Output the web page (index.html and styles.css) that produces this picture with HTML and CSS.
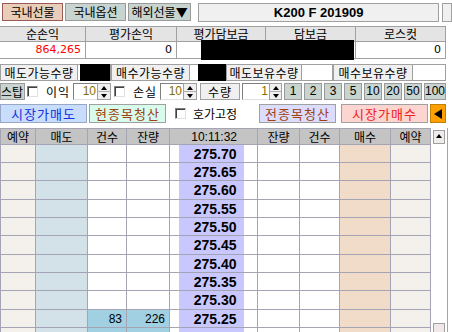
FILE: index.html
```html
<!DOCTYPE html>
<html lang="ko">
<head>
<meta charset="utf-8">
<link rel="stylesheet" href="styles.css">
</head>
<body>
<div class="app">
  <div class="tabs">
    <div class="tab tab-on">국내선물</div>
    <div class="tab">국내옵션</div>
    <div class="tab tab-wide">해외선물▼</div>
    <div class="title">K200 F 201909</div>
    <div class="edge"></div>
  </div>

  <div class="summary">
    <div class="sh">순손익</div>
    <div class="sh">평가손익</div>
    <div class="sh">평가담보금</div>
    <div class="sh">담보금</div>
    <div class="sh">로스컷</div>
    <div class="sv red">864,265</div>
    <div class="sv">0</div>
    <div class="sv"></div>
    <div class="sv"></div>
    <div class="sv">0</div>
    <div class="redact r1"></div>
  </div>

  <div class="qty">
    <div class="lbl w78">매도가능수량</div>
    <div class="val w33"><span class="blk b1"></span></div>
    <div class="lbl w79">매수가능수량</div>
    <div class="val w36"><span class="blk b2"></span></div>
    <div class="lbl w76">매도보유수량</div>
    <div class="val w31"></div>
    <div class="lbl w80">매수보유수량</div>
    <div class="val w33"></div>
  </div>

  <div class="ctrl">
    <div class="btn stop">스탑</div>
    <span class="chk c1"></span>
    <span class="txt t1">이익</span>
    <div class="spin s1"><span class="inp">10</span><span class="arr"><i class="up"></i><i class="dn"></i></span></div>
    <span class="chk c2"></span>
    <span class="txt t2">손실</span>
    <div class="spin s2"><span class="inp">10</span><span class="arr"><i class="up"></i><i class="dn"></i></span></div>
    <div class="lbl qlbl">수량</div>
    <div class="spin s3"><span class="inp">1</span><span class="arr"><i class="up"></i><i class="dn"></i></span></div>
    <div class="nums">
      <div class="btn n">1</div>
      <div class="btn n">2</div>
      <div class="btn n">3</div>
      <div class="btn n">5</div>
      <div class="btn n">10</div>
      <div class="btn n">20</div>
      <div class="btn n">50</div>
      <div class="btn n n100">100</div>
    </div>
  </div>

  <div class="actions">
    <div class="act sell">시장가매도</div>
    <div class="act clr1">현종목청산</div>
    <span class="chk c3"></span>
    <span class="txt t3">호가고정</span>
    <div class="act clr2">전종목청산</div>
    <div class="act buy">시장가매수</div>
    <div class="act orange"><i class="left"></i></div>
  </div>

  <div class="bookwrap">
    <table class="book">
      <colgroup>
        <col class="c35"><col class="c52"><col class="c39"><col class="c43">
        <col class="c9"><col class="c65"><col class="c14">
        <col class="c42"><col class="c40"><col class="c51"><col class="c40">
      </colgroup>
      <thead>
        <tr><th>예약</th><th>매도</th><th>건수</th><th>잔량</th><th colspan="3" class="time">10:11:32</th><th>잔량</th><th>건수</th><th>매수</th><th>예약</th></tr>
      </thead>
      <tbody>
        <tr><td class="rsv"></td><td class="ask"></td><td></td><td></td><td class="pl"></td><td class="px">275.70</td><td class="pr"></td><td></td><td></td><td class="bid"></td><td class="rsv"></td></tr>
        <tr><td class="rsv"></td><td class="ask"></td><td></td><td></td><td class="pl"></td><td class="px">275.65</td><td class="pr"></td><td></td><td></td><td class="bid"></td><td class="rsv"></td></tr>
        <tr><td class="rsv"></td><td class="ask"></td><td></td><td></td><td class="pl"></td><td class="px">275.60</td><td class="pr"></td><td></td><td></td><td class="bid"></td><td class="rsv"></td></tr>
        <tr><td class="rsv"></td><td class="ask"></td><td></td><td></td><td class="pl"></td><td class="px">275.55</td><td class="pr"></td><td></td><td></td><td class="bid"></td><td class="rsv"></td></tr>
        <tr><td class="rsv"></td><td class="ask"></td><td></td><td></td><td class="pl"></td><td class="px">275.50</td><td class="pr"></td><td></td><td></td><td class="bid"></td><td class="rsv"></td></tr>
        <tr><td class="rsv"></td><td class="ask"></td><td></td><td></td><td class="pl"></td><td class="px">275.45</td><td class="pr"></td><td></td><td></td><td class="bid"></td><td class="rsv"></td></tr>
        <tr><td class="rsv"></td><td class="ask"></td><td></td><td></td><td class="pl"></td><td class="px">275.40</td><td class="pr"></td><td></td><td></td><td class="bid"></td><td class="rsv"></td></tr>
        <tr><td class="rsv"></td><td class="ask"></td><td></td><td></td><td class="pl"></td><td class="px">275.35</td><td class="pr"></td><td></td><td></td><td class="bid"></td><td class="rsv"></td></tr>
        <tr><td class="rsv"></td><td class="ask"></td><td></td><td></td><td class="pl"></td><td class="px">275.30</td><td class="pr"></td><td></td><td></td><td class="bid"></td><td class="rsv"></td></tr>
        <tr><td class="rsv"></td><td class="ask"></td><td class="hl num">83</td><td class="hl num">226</td><td class="pl"></td><td class="px">275.25</td><td class="pr"></td><td></td><td></td><td class="bid"></td><td class="rsv"></td></tr>
        <tr><td class="rsv"></td><td class="ask"></td><td class="hl"></td><td class="hl"></td><td class="pl"></td><td class="px"></td><td class="pr"></td><td></td><td></td><td class="bid"></td><td class="rsv"></td></tr>
      </tbody>
    </table>
    <div class="scroll">
      <div class="sbtn"><i class="up"></i></div>
      <div class="sthumb"></div>
    </div>
  </div>
</div>
</body>
</html>
```

FILE: styles.css
```css
* { box-sizing: border-box; }
html, body { margin: 0; padding: 0; }
body {
  width: 452px; height: 332px; overflow: hidden; background: #ffffff;
  font-family: "Noto Sans CJK KR", "Noto Sans", sans-serif;
  font-size: 12px; color: #000;
}
.app { position: relative; width: 452px; height: 332px; }

/* tabs */
.tabs { display: flex; padding: 3px 0 0 2px; height: 26px; }
.tab {
  width: 62px; height: 18px; margin-right: 2px;
  border: 1px solid #9a9a9a; background: #c8d4d0;
  font-size: 12px; line-height: 16px; text-align: center;
}
.tab-on { background: #e8ceb8; border-color: #9a5a5a; }
.tab-wide { width: 64px; }
.title {
  margin-left: 5px; width: 245px; height: 19px;
  border: 1px solid #a0a0a0; background: #f0f0f0;
  font-family: "Liberation Sans", sans-serif; font-weight: bold; font-size: 13px;
  line-height: 17px; text-align: center;
}
.edge { margin-left: 3px; width: 10px; height: 19px; border: 1px solid #a0a0a0; background: #f0f0f0; }

/* summary */
.summary {
  position: relative;
  display: grid; grid-template-columns: 86px 91px 89px 90px 90px;
  width: 446px; border-top: 1px solid #a0a0a0;
}
.sh {
  height: 15px; background: #e4e4e4; border-right: 1px solid #a0a0a0; border-bottom: 1px solid #a0a0a0;
  text-align: center; line-height: 14px; font-size: 12px;
}
.sv {
  height: 17px; border-right: 1px solid #a0a0a0; border-bottom: 1px solid #a0a0a0;
  text-align: right; padding-right: 4px; line-height: 16px;
  font-family: "DejaVu Sans", sans-serif; font-size: 11px;
}
.red { color: #ff0000; }
.redact { position: absolute; background: #000; }
.r1 { left: 201px; top: 13px; width: 153px; height: 20px; }

/* quantity row */
.qty { display: flex; margin-top: 5px; height: 17px; }
.lbl {
  height: 17px; border: 1px solid #a0a0a0; background: #f0f0f0;
  text-align: center; line-height: 15px; font-size: 12px; letter-spacing: 0.5px; white-space: nowrap; overflow: hidden;
}
.val { height: 17px; border: 1px solid #a0a0a0; border-left: none; background: #fff; position: relative; }
.w78 { width: 78px; } .w79 { width: 79px; } .w76 { width: 76px; } .w80 { width: 80px; }
.w33 { width: 33px; } .w36 { width: 36px; } .w31 { width: 31px; }
.blk { position: absolute; background: #000; top: -1px; height: 17px; }
.b1 { left: 2px; width: 30px; }
.b2 { left: 8px; width: 28px; }

/* controls row */
.ctrl { display: flex; align-items: center; margin-top: 2px; height: 17px; }
.btn {
  flex: none; height: 17px; border: 1px solid #9a9a9a; background: #c8d4d0;
  text-align: center; line-height: 15px; font-size: 12px;
}
.stop { width: 25px; text-align: right; padding-right: 2px; overflow: hidden; white-space: nowrap; }
.chk {
  flex: none; display: inline-block; width: 11px; height: 11px; background: #fff;
  border: 1px solid #808080; border-right-color: #e0e0e0; border-bottom-color: #e0e0e0;
  box-shadow: inset 1px 1px 0 #404040;
}
.c1 { margin-left: 2px; }
.txt { flex: none; display: inline-block; font-size: 12px; letter-spacing: 1px; white-space: nowrap; }
.t1, .t2 { width: 27px; }
.t1 { margin-left: 8px; }
.spin { flex: none; display: flex; height: 17px; }
.s1 { margin-left: 0px; }
.inp {
  width: 24px; height: 17px; background: #fff;
  border: 1px solid #808080; border-right: none; border-bottom-color: #e0e0e0;
  text-align: right; padding-right: 1px; line-height: 15px;
  font-family: "Liberation Sans", sans-serif; font-size: 12px; color: #807000;
}
.arr { display: flex; flex-direction: column; width: 14px; height: 17px; border: 1px solid #a0a0a0; background: #f0f0f0; }
.arr i { flex: 1; position: relative; }
.arr i + i { border-top: 1px solid #b0b0b0; }
.up::after, .dn::after {
  content: ""; position: absolute; left: 50%; top: 50%; margin-left: -3px; margin-top: -2px;
  border-left: 3px solid transparent; border-right: 3px solid transparent;
}
.up::after { border-bottom: 4px solid #000; }
.dn::after { border-top: 4px solid #000; }
.c2 { margin-left: 3px; }
.t2 { margin-left: 8px; }
.s2 .inp { width: 23px; }
.qlbl { width: 40px; margin-left: 3px; letter-spacing: 1px; }
.s3 { margin-left: 2px; }
.s3 .inp { width: 27px; }
.s3 .arr { width: 13px; }
.nums { display: flex; margin-left: 2px; gap: 2px; }
.n { width: 18px; font-family: "Liberation Sans", sans-serif; }
.n100 { width: 22px; }

/* actions */
.actions { display: flex; align-items: center; margin-top: 3px; height: 20px; }
.act { flex: none; height: 19px; border: 1px solid #a0a0a0; text-align: center; line-height: 17px; font-size: 13px; letter-spacing: 1px; }
.sell { width: 87px; background: #c8dcfc; color: #1030e0; border-color: #98a8c8; }
.clr1 { width: 77px; margin-left: 2px; background: #d8fceb; color: #a04010; }
.c3 { margin-left: 9px; }
.t3 { margin-left: 7px; width: 48px; letter-spacing: 0; }
.clr2 { width: 77px; margin-left: 18px; background: #dcdcfc; color: #a04010; }
.buy { width: 87px; margin-left: 5px; background: #fcd4d0; color: #f02020; }
.orange { width: 16px; margin-left: 2px; background: #ffa000; border-color: #c08000; position: relative; }
.left::after {
  content: ""; position: absolute; left: 3px; top: 4px;
  border-top: 5px solid transparent; border-bottom: 5px solid transparent; border-right: 8px solid #000;
}

/* order book */
.bookwrap { display: flex; margin-top: 5px; }
.book { border-collapse: collapse; table-layout: fixed; width: 430px; }
.c35 { width: 35px; } .c52 { width: 52px; } .c39 { width: 39px; } .c43 { width: 43px; }
.c9 { width: 9px; } .c65 { width: 65px; } .c14 { width: 14px; }
.c42 { width: 42px; } .c40 { width: 40px; } .c51 { width: 51px; }
.book th, .book td { border: 1px solid #a4a4b4; padding: 0; }
.book th { height: 16px; background: #c4c4c4; font-weight: normal; font-size: 12px; line-height: 14px; }
.book th.time { text-align: right; padding-right: 20px; font-family: "Liberation Sans", sans-serif; font-size: 12px; }
.book td { height: 18px; background: #fff; }
.book tbody tr:nth-child(3n) td { height: 19px; }
.book td.rsv { background: #f4f0ec; }
.book td.ask { background: #d2e2e8; }
.book td.bid { background: #f0dcc8; }
.book td.pl { border-right: none; }
.book td.pr { border-left: none; }
.book td.px {
  background: #c8c8ff; border-left: none; border-right: none;
  text-align: right; padding-right: 7px;
  font-family: "Liberation Sans", sans-serif; font-weight: bold; font-size: 14px; line-height: 16px;
}
.book td.hl { background: #a0d0e2; }
.book td.num { text-align: right; padding-right: 4px; font-family: "Liberation Sans", sans-serif; font-size: 12px; }

.scroll { position: relative; width: 17px; height: 210px; border-right: 1px solid #a4a4b4; background: #fff; }
.sbtn {
  position: absolute; left: 2px; top: 2px; width: 12px; height: 14px;
  border: 1px solid #a0a0a0; background: #f0ecec;
}
.sbtn .up::after { margin-top: -3px; }
.sthumb { position: absolute; left: 2px; top: 195px; width: 12px; height: 10px; border: 1px solid #a0a0a0; background: #f0e8e8; }
```
